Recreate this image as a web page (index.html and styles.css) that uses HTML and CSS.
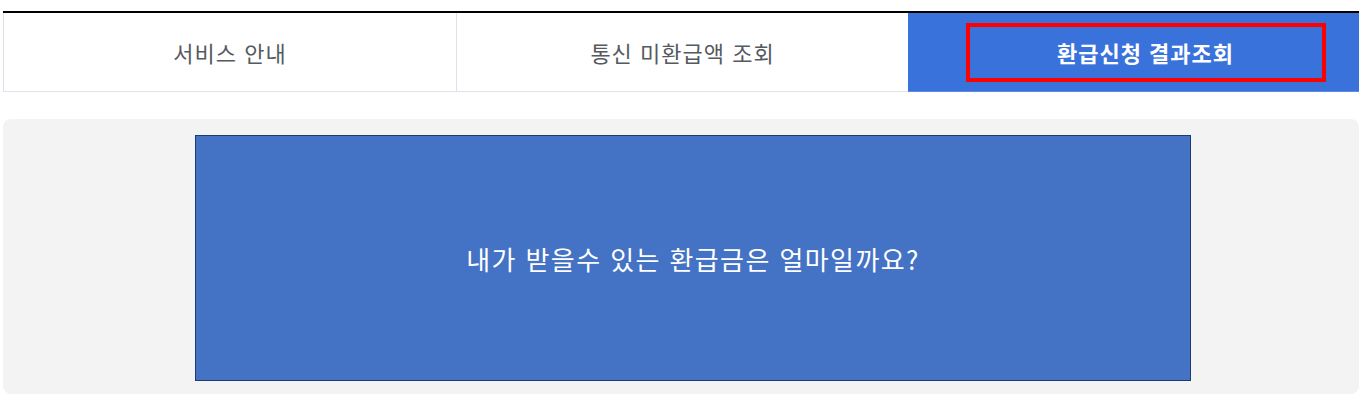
FILE: index.html
```html
<!DOCTYPE html>
<html lang="ko">
<head>
    <meta charset="UTF-8">
    <title>환급신청 결과조회</title>
    <link rel="stylesheet" href="styles.css">
</head>
<body>
    <div class="wrap">
        <ul class="tabs">
            <li class="tab">서비스 안내</li>
            <li class="tab">통신 미환급액 조회</li>
            <li class="tab active"><span class="tab-mark">환급신청 결과조회</span></li>
        </ul>
        <div class="panel">
            <div class="banner">내가 받을수 있는 환급금은 얼마일까요?</div>
        </div>
    </div>
</body>
</html>
```

FILE: styles.css
```css
body {
    margin: 0;
    font-family: "Noto Sans CJK KR", "Noto Sans", sans-serif;
    background: #fff;
}
.wrap {
    width: 1356px;
    margin: 11px 0 0 3px;
}
.tabs {
    display: grid;
    grid-template-columns: 453px 452px 1fr;
    margin: 0;
    padding: 0;
    list-style: none;
    border-top: 2px solid #000;
}
.tab {
    display: flex;
    align-items: center;
    justify-content: center;
    height: 78px;
    font-size: 22px;
    color: #555a60;
    letter-spacing: 1px;
    border-bottom: 1px solid #dde3ea;
    border-left: 1px solid #dde3ea;
}
.tab.active {
    background: #3a72dc;
    color: #fff;
    font-weight: bold;
    border-left: none;
    border-bottom-color: #5a8ae3;
}
.tab-mark {
    display: flex;
    align-items: center;
    justify-content: center;
    width: 352px;
    height: 51px;
    margin-left: 24px;
    border: 4px solid #ff0000;
}
.panel {
    margin-top: 27px;
    padding: 16px 0 13px 192px;
    background: #f3f3f3;
    border-radius: 8px;
    display: flex;
}
.banner {
    display: flex;
    align-items: center;
    justify-content: center;
    width: 994px;
    height: 244px;
    background: #4472c4;
    border: 1px solid #1f3a6e;
    color: #fff;
    font-size: 26px;
    letter-spacing: 1.4px;
}
```
